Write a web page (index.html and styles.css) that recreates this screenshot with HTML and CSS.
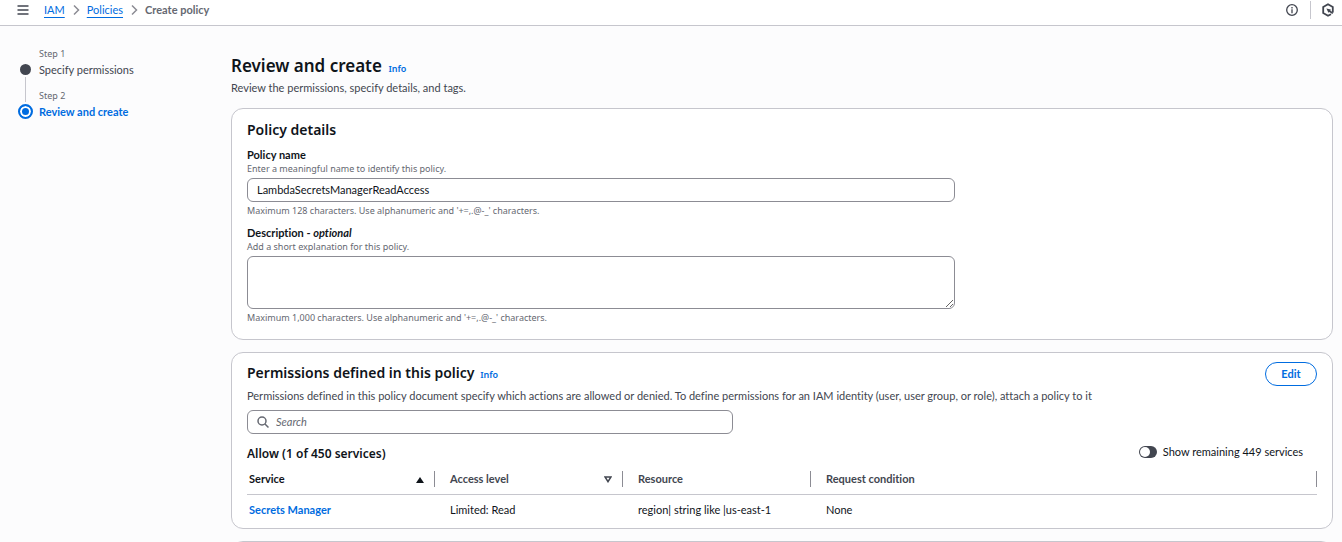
FILE: index.html
```html
<!DOCTYPE html>
<html lang="en">
<head>
  <meta charset="UTF-8">
  <meta name="viewport" content="width=device-width, initial-scale=1.0">
  <title>Create policy</title>
  <link rel="stylesheet" href="styles.css">
</head>
<body>

  <header class="topbar">
    <button class="icon-button" aria-label="Open navigation">
      <svg width="14" height="12" viewBox="0 0 14 12"><path d="M1.5 2h11M1.5 6h11M1.5 10h11" stroke="#424650" stroke-width="1.5"/></svg>
    </button>
    <nav class="breadcrumbs" aria-label="Breadcrumbs">
      <a href="#">IAM</a>
      <svg width="8" height="12" viewBox="0 0 8 12"><path d="M2 1.5L6.5 6 2 10.5" fill="none" stroke="#8c8c94" stroke-width="1.5"/></svg>
      <a href="#">Policies</a>
      <svg width="8" height="12" viewBox="0 0 8 12"><path d="M2 1.5L6.5 6 2 10.5" fill="none" stroke="#8c8c94" stroke-width="1.5"/></svg>
      <span class="current">Create policy</span>
    </nav>
    <div class="tools">
      <button class="icon-button" aria-label="Info panel">
        <svg width="14" height="14" viewBox="0 0 14 14"><circle cx="7" cy="7" r="5.3" fill="none" stroke="#424650" stroke-width="1.3"/><path d="M7 4v1.4M7 6.2v4" stroke="#424650" stroke-width="1.3"/></svg>
      </button>
      <button class="icon-button divided" aria-label="Assistant">
        <svg width="14" height="14" viewBox="0 0 14 14"><path d="M10 11.2L7 12.8 2.2 10V4L7 1.2 11.8 4v5.6" fill="none" stroke="#424650" stroke-width="1.8"/><path d="M5.4 5.4l4.4 1-.5 1.1 3 2.2-1 1.4-3-2.2-.9.8z" fill="#424650"/></svg>
      </button>
    </div>
  </header>

  <div class="layout">
    <ol class="steps">
      <li class="step">
        <span class="dot"></span>
        <div>
          <div class="step-number">Step 1</div>
          <a class="step-name" href="#">Specify permissions</a>
        </div>
      </li>
      <li class="step active">
        <span class="dot"></span>
        <div>
          <div class="step-number">Step 2</div>
          <span class="step-name">Review and create</span>
        </div>
      </li>
    </ol>

    <main>
      <h1>Review and create <a class="info" href="#">Info</a></h1>
      <p class="lead">Review the permissions, specify details, and tags.</p>

      <section class="card">
        <h2>Policy details</h2>
        <div class="field">
          <label for="policy-name">Policy name</label>
          <p class="hint">Enter a meaningful name to identify this policy.</p>
          <input id="policy-name" class="control" type="text" value="LambdaSecretsManagerReadAccess">
          <p class="constraint">Maximum 128 characters. Use alphanumeric and '+=,.@-_' characters.</p>
        </div>
        <div class="field">
          <label for="description">Description - <em>optional</em></label>
          <p class="hint">Add a short explanation for this policy.</p>
          <textarea id="description" class="control"></textarea>
          <p class="constraint">Maximum 1,000 characters. Use alphanumeric and '+=,.@-_' characters.</p>
        </div>
      </section>

      <section class="card permissions">
        <div class="card-header">
          <h2>Permissions defined in this policy <a class="info" href="#">Info</a></h2>
          <button class="edit">Edit</button>
        </div>
        <p class="summary">Permissions defined in this policy document specify which actions are allowed or denied. To define permissions for an IAM identity (user, user group, or role), attach a policy to it</p>
        <div class="search">
          <svg width="14" height="14" viewBox="0 0 14 14"><circle cx="6" cy="6" r="4" fill="none" stroke="#656871" stroke-width="1.5"/><path d="M9 9l3.5 3.5" stroke="#656871" stroke-width="1.5"/></svg>
          <input type="search" placeholder="Search" aria-label="Search">
        </div>
        <div class="table-header">
          <h3>Allow (1 of 450 services)</h3>
          <label class="toggle"><input type="checkbox" role="switch">Show remaining 449 services</label>
        </div>
        <table>
          <thead>
            <tr>
              <th class="sorted"><div>Service <svg width="8" height="8" viewBox="0 0 8 8"><path d="M4 2l4 6H0z" fill="#0f141a"/></svg></div></th>
              <th><div>Access level <svg width="8" height="8" viewBox="0 0 8 8"><path d="M1 2h6L4 6.7z" fill="none" stroke="#424650" stroke-width="1.5"/></svg></div></th>
              <th><div>Resource</div></th>
              <th class="wide"><div>Request condition</div></th>
            </tr>
          </thead>
          <tbody>
            <tr>
              <td><a href="#">Secrets Manager</a></td>
              <td>Limited: Read</td>
              <td>region| string like |us-east-1</td>
              <td>None</td>
            </tr>
          </tbody>
        </table>
      </section>

      <section class="card next"></section>
    </main>
  </div>

</body>
</html>
```

FILE: styles.css
```css
* {
  box-sizing: border-box;
}

body {
  display: flex;
  flex-direction: column;
  margin: 0;
  height: 100vh;
  overflow: hidden;
  font-family: Lato, "Noto Sans", sans-serif;
  font-size: 11px;
  line-height: 16px;
  font-variant-ligatures: none;
  color: #0f141a;
  background-color: #fcfcfd;
}

h1, h2, h3, p {
  margin: 0;
}

/* headings and small print */
h1, h2, h3, .hint, .constraint, .step-number {
  font-family: "Noto Sans", sans-serif;
}

a {
  color: #006ce0;
}

svg {
  display: block;
  flex: none;
}

input, textarea, button {
  font-family: inherit;
  font-size: 11px;
  line-height: 16px;
  color: inherit;
}

/* Top bar */
.topbar {
  display: flex;
  flex: none;
  align-items: center;
  height: 26px;
  padding: 0 7px 6px 16px;
  border-bottom: 1px solid #c6c6cd;
  background-color: #fff;
}

.icon-button {
  padding: 0;
  border: 0;
  background: none;
  cursor: pointer;
}

.breadcrumbs {
  display: flex;
  align-items: center;
  gap: 7px;
  margin-left: 14px;
}

.breadcrumbs a {
  text-underline-offset: 3px;
}

.breadcrumbs .current {
  font-weight: 700;
  color: #656871;
}

.tools {
  display: flex;
  align-items: center;
  gap: 11px;
  margin-left: auto;
}

.divided {
  padding: 2px 0 2px 10px;
  border-left: 1px solid #c6c6cd;
}

/* Steps and main column */
.layout {
  display: grid;
  flex: 1;
  grid-template-columns: 231px 1fr;
  min-height: 0;
  padding-right: 9px;
}

main {
  min-height: 0;
  overflow: hidden;
}

.steps {
  margin: 0;
  padding: 20px 0 0 18px;
  list-style: none;
}

.step {
  position: relative;
  display: flex;
  gap: 6px;
  height: 42px;
}

.step-number {
  font-size: 9px;
  color: #656871;
}

.step-name {
  display: block;
  color: #424650;
  text-decoration: none;
}

.dot {
  width: 11px;
  height: 11px;
  margin: 18px 2px 0;
  border-radius: 50%;
  background-color: #424650;
}

/* line that joins the two steps */
.step:first-child::after {
  content: "";
  position: absolute;
  top: 31px;
  left: 7px;
  width: 1px;
  height: 25px;
  background-color: #c6c6cd;
}

.active .dot {
  width: 15px;
  height: 15px;
  margin: 16px 0 0;
  border: 2px solid #006ce0;
  background-color: #006ce0;
  box-shadow: inset 0 0 0 2px #fff;
}

.active .step-name {
  font-weight: 700;
  color: #006ce0;
}

h1 {
  padding-top: 29px;
  font-size: 17px;
  line-height: 22px;
  font-weight: 600;
}

.info {
  margin-left: 2px;
  font-size: 9px;
  font-weight: 600;
  text-decoration: none;
}

.lead {
  padding-bottom: 12px;
  color: #424650;
}

.card {
  margin-bottom: 12px;
  padding: 11px 15px 14px;
  border: 1px solid #c6c6cd;
  border-radius: 12px;
  background-color: #fff;
}

h2 {
  font-size: 14px;
  line-height: 20px;
  font-weight: 600;
}

/* Form */
.field {
  max-width: 708px;
  padding: 7px 0 1px;
}

.field label {
  display: block;
  font-weight: 700;
}

.hint, .constraint {
  font-size: 9px;
  line-height: 12px;
  color: #656871;
}

.hint {
  padding-bottom: 3px;
}

.constraint {
  padding-top: 3px;
}

.control {
  display: block;
  width: 100%;
  height: 24px;
  padding: 2px 9px 4px;
  border: 1px solid #8c8c94;
  border-radius: 6px;
  background-color: #fff;
}

textarea.control {
  height: 53px;
  resize: vertical;
}

/* Permissions */
.permissions {
  padding: 9px 15px 4px;
}

.card-header {
  display: flex;
  align-items: center;
  justify-content: space-between;
}

.edit {
  width: 52px;
  height: 24px;
  padding: 0;
  border: 1px solid #006ce0;
  border-radius: 12px;
  background-color: #fff;
  color: #006ce0;
  font-weight: 700;
  cursor: pointer;
}

.summary {
  padding: 2px 0 6px;
  color: #424650;
}

.search {
  display: flex;
  align-items: center;
  gap: 6px;
  max-width: 486px;
  height: 24px;
  padding: 0 8px;
  border: 1px solid #8c8c94;
  border-radius: 6px;
}

.search input {
  flex: 1;
  padding: 0;
  border: 0;
  outline: none;
  background: none;
}

.search input::placeholder {
  font-style: italic;
  color: #656871;
}

.table-header {
  display: flex;
  align-items: flex-start;
  justify-content: space-between;
  padding: 10px 14px 7px 0;
}

h3 {
  font-size: 12px;
  line-height: 20px;
  font-weight: 600;
}

.toggle {
  display: flex;
  align-items: center;
  gap: 6px;
}

.toggle input {
  display: flex;
  align-items: center;
  appearance: none;
  width: 18px;
  height: 12px;
  margin: 0;
  padding: 1px;
  border-radius: 6px;
  background-color: #424650;
}

.toggle input::before {
  content: "";
  width: 10px;
  height: 10px;
  border-radius: 50%;
  background-color: #fff;
}

table {
  width: 100%;
  table-layout: fixed;
  border-collapse: collapse;
}

th, td {
  padding: 7px 0 6px 15px;
  text-align: left;
}

th:first-child, td:first-child {
  padding-left: 2px;
}

th {
  width: 188px;
  padding-top: 0;
  padding-bottom: 7px;
  border-bottom: 1px solid #c6c6cd;
  font-weight: 700;
  color: #424650;
}

th.wide {
  width: auto;
}

th.sorted {
  color: #0f141a;
}

th div {
  display: flex;
  align-items: center;
  justify-content: space-between;
  padding-right: 10px;
  border-right: 1px solid #8c8c94;
}

td a {
  font-weight: 700;
  text-decoration: none;
}

.next {
  height: 80px;
}
```
